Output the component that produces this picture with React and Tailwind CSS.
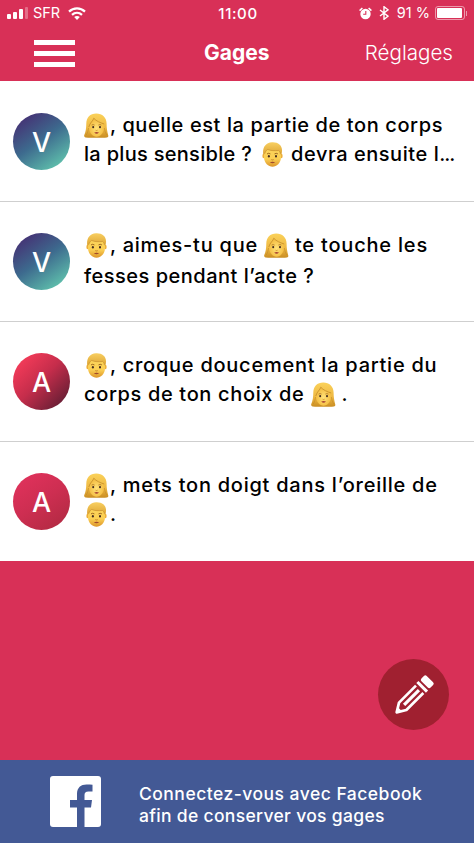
function Woman({ className = '' }) {
  return (
    <svg viewBox="0 0 25 25" className={`inline-block h-[25px] w-[25px] shrink-0 ${className}`}>
      <defs>
        <linearGradient id="hairW" x1="0" y1="0" x2="0" y2="1">
          <stop offset="0" stopColor="#fbd25a" />
          <stop offset="0.6" stopColor="#eeb843" />
          <stop offset="1" stopColor="#c98d22" />
        </linearGradient>
        <radialGradient id="skinW" cx="0.5" cy="0.55" r="0.6">
          <stop offset="0" stopColor="#ffe27a" />
          <stop offset="1" stopColor="#f2b637" />
        </radialGradient>
      </defs>
      <path d="M12.3 0.4C6 .4 2.4 4.5 2.3 10.5c0 4-.6 8.500-2 11.500-.5 1.200.1 2.300 1.400 2.500 3 .5 6 .4 9 .2h4c3 .2 5.800.3 8.200-.2 1.200-.2 1.700-1.100 1.300-2.300-1-3.200-1.600-7.500-1.600-11.700C22.500 4.200 18.300.4 12.300.4z" fill="url(#hairW)" />
      <path d="M5 13C6.500 9.500 9 8 9.800 5.200c2.200 2.800 6.500 4.600 10.200 5.600v3.700c0 5-3.500 9.300-7.400 9.300S5 19.500 5 14.500z" fill="url(#skinW)" />
      <path d="M4.800 14C6 9.500 9 8 9.800 5.200c2.200 2.800 6.500 4.600 10.400 5.800" fill="none" stroke="#bd8525" strokeWidth="0.7" />
      <path d="M2.200 22c1.500-2 2-4.500 2.300-7M22.600 22c-1.200-2-1.800-4.500-2.300-7" fill="none" stroke="#c28a26" strokeWidth="0.6" />
      <path d="M7.600 12.100q1.500-1 3 0M14.400 12.100q1.500-1 3 0" fill="none" stroke="#9d651b" strokeWidth="0.7" />
      <ellipse cx="9.200" cy="14.100" rx="1" ry="1.200" fill="#432b20" />
      <ellipse cx="16" cy="14.100" rx="1" ry="1.200" fill="#432b20" />
      <path d="M11.600 17.200q1 .6 2 0" fill="none" stroke="#c5821f" strokeWidth="0.7" />
      <path d="M10.200 19.500q2.400-1 4.800 0-2.400 2.600-4.800 0z" fill="#aa4532" />
    </svg>
  )
}

function Man({ className = '' }) {
  return (
    <svg viewBox="0 0 25 25" className={`inline-block h-[25px] w-[25px] shrink-0 ${className}`}>
      <defs>
        <linearGradient id="skinM" x1="0" y1="0" x2="0" y2="1">
          <stop offset="0" stopColor="#fbd65e" />
          <stop offset="0.65" stopColor="#fbcf53" />
          <stop offset="1" stopColor="#dc9428" />
        </linearGradient>
        <linearGradient id="hairM" x1="0" y1="0" x2="0" y2="1">
          <stop offset="0" stopColor="#f8cf61" />
          <stop offset="1" stopColor="#dda433" />
        </linearGradient>
      </defs>
      <ellipse cx="3.600" cy="14" rx="1.200" ry="2.300" fill="#edae3b" />
      <ellipse cx="21.400" cy="14" rx="1.200" ry="2.300" fill="#edae3b" />
      <path d="M4 10c0-5 4-8 8.500-8S21 5 21 10v5c0 6-4.500 9.800-8.500 9.800S4 21 4 15z" fill="url(#skinM)" />
      <path d="M3.200 12.500C2.400 6 5 .8 12 .3c6-.4 10.500 3.200 10 8.700 0 1.500-.3 2.600-.6 3.500l-1.200-.3c0-1.800-.4-3-1.500-3.700-4 .4-8.200.3-11-1C6 8.500 5 10 4.600 12.300z" fill="url(#hairM)" />
      <path d="M4.900 11.500c.5-2 1.300-3.200 2.800-4 2.800 1.300 7 1.400 11 1 1 .7 1.400 1.700 1.400 3" fill="none" stroke="#b87e25" strokeWidth="0.5" />
      <path d="M7 11.900q1.700-1.200 3.400 0M14.500 11.900q1.700-1.200 3.400 0" fill="none" stroke="#96601b" strokeWidth="0.9" />
      <ellipse cx="8.900" cy="14.200" rx="1" ry="1.200" fill="#432b20" />
      <ellipse cx="16" cy="14.200" rx="1" ry="1.200" fill="#432b20" />
      <path d="M11.300 17.600q1.200.7 2.400 0" fill="none" stroke="#b97822" strokeWidth="0.8" />
      <path d="M9.800 20.200q2.700-1 5.400 0-2.700 1.900-5.400 0z" fill="#a04a2c" />
    </svg>
  )
}

// Two lines per gage, the spacing is tuned for each piece of text
const gages = [
  {
    letter: 'V',
    circle: 'bg-[linear-gradient(145deg,#453375_12%,#3d6a8e_48%,#60c3ad_90%)]',
    second: '',
    lines: [
      <><Woman /><span className="ml-[1px] tracking-[0.6px]">, quelle est la partie de ton corps</span></>,
      <><span className="tracking-[0.3px]">la plus sensible ?</span><Man className="ml-[8px] mr-[6px]" /><span className="tracking-[0.55px]">devra ensuite l</span><span className="-tracking-[1px]">...</span></>,
    ],
  },
  {
    letter: 'V',
    circle: 'bg-[linear-gradient(145deg,#453375_12%,#3d6a8e_48%,#60c3ad_90%)]',
    second: 'mt-[2px]',
    lines: [
      <><Man /><span className="ml-[1px] tracking-[0.75px]">, aimes-tu que</span><Woman className="mx-[6px]" /><span className="tracking-[0.8px]">te touche les</span></>,
      <span className="tracking-[0.5px]">fesses pendant l’acte ?</span>,
    ],
  },
  {
    letter: 'A',
    circle: 'bg-[linear-gradient(135deg,#f03a58_15%,#c52d4b_48%,#641e34_90%)]',
    second: '',
    lines: [
      <><Man /><span className="ml-[1px] tracking-[0.75px]">, croque doucement la partie du</span></>,
      <><span className="tracking-[0.65px]">corps de ton choix de</span><Woman className="mx-[6px]" /><span>.</span></>,
    ],
  },
  {
    letter: 'A',
    circle: 'bg-[linear-gradient(145deg,#dd315a_15%,#cd2e51_50%,#b32a43_90%)]',
    second: '',
    lines: [
      <><Woman /><span className="ml-[1px] tracking-[0.75px]">, mets ton doigt dans l’oreille de</span></>,
      <><Man /><span className="ml-[1px]">.</span></>,
    ],
  },
]

function StatusBar() {
  return (
    <div className="flex h-[26px] items-center font-['Inter',sans-serif] text-[14px] leading-none">
      <div className="flex flex-1 items-center pl-[7px]">
        <div className="flex h-[12px] items-end gap-[2px]">
          <i className="h-[5px] w-[4px] rounded-[1px] bg-white" />
          <i className="h-[7px] w-[4px] rounded-[1px] bg-white" />
          <i className="h-[10px] w-[4px] rounded-[1px] bg-white" />
          <i className="h-[12px] w-[3px] rounded-[1px] bg-white/30" />
        </div>
        <span className="ml-[5px] text-[14.500px]">SFR</span>
        <svg viewBox="0 0 18 13" className="ml-[8px] h-[13px] w-[18px]" fill="none" stroke="white" strokeWidth="2.200">
          <path d="M1 4.600C5.500.2 12.500.2 17 4.600" />
          <path d="M4 7.900c3-2.800 7-2.800 10 0" />
          <path d="M6.200 10.100c1.600-1.500 4-1.500 5.600 0L9 13z" fill="white" stroke="none" />
        </svg>
      </div>
      <span className="ml-[2px] text-[15px] font-medium tracking-[0.6px]">11:00</span>
      <div className="flex flex-1 items-center justify-end pr-[7px]">
        <svg viewBox="0 0 13 13" className="h-[13px] w-[13px]">
          <circle cx="6.500" cy="7" r="5.200" fill="white" />
          <path d="M.6 3.600 3.400 1M12.400 3.600 9.600 1" stroke="white" strokeWidth="1.500" />
          <path d="M6.800 4v3.300H4.200" fill="none" stroke="#d83057" strokeWidth="1.100" />
        </svg>
        <svg viewBox="0 0 10 14" className="ml-[7px] h-[14px] w-[10px]" fill="none" stroke="white" strokeWidth="1.400">
          <path d="M1 4l8 6.200-4 3.100V.7l4 3.100L1 10" />
        </svg>
        <span className="ml-[8px] text-[14.500px]">91 %</span>
        <div className="ml-[5px] h-[14px] w-[30px] rounded-[3px] border border-white/50 p-[1px]">
          <div className="h-full w-[25px] rounded-[1px] bg-white" />
        </div>
        <i className="ml-[1px] h-[5px] w-[1px] bg-white/50" />
      </div>
    </div>
  )
}

function App() {
  return (
    <div className="flex h-[843px] w-[474px] flex-col overflow-hidden bg-[#d83057] font-['Inter',sans-serif] text-white">
      <header className="h-[81px] shrink-0">
        <StatusBar />
        <div className="flex h-[54px] items-center">
          <div className="flex w-[204px] pl-[34px]">
            <div className="flex flex-col gap-[6px]">
              <i className="h-[5px] w-[41px] bg-white" />
              <i className="h-[5px] w-[41px] bg-white" />
              <i className="h-[5px] w-[41px] bg-white" />
            </div>
          </div>
          <h1 className="text-[21px] font-bold">Gages</h1>
          <div className="flex flex-1 justify-end pr-[21px] text-[20.600px] font-light">Réglages</div>
        </div>
      </header>

      <main className="bg-white text-black">
        {gages.map((gage, i) => (
          <div key={i} className={`flex h-[120px] border-t pl-[13px] ${i > 0 ? 'border-[#cfcfcf]' : 'border-white'}`}>
            <div className={`mt-[31px] flex h-[57px] w-[57px] shrink-0 items-center justify-center rounded-full pt-[3px] text-[27px] font-medium text-white ${gage.circle}`}>
              {gage.letter}
            </div>
            <div className="ml-[14px] mt-[29px] text-[20px] font-medium leading-[29px]">
              <div className="flex h-[29px] items-center whitespace-pre">{gage.lines[0]}</div>
              <div className={`flex h-[29px] items-center whitespace-pre ${gage.second}`}>{gage.lines[1]}</div>
            </div>
          </div>
        ))}
      </main>

      <div className="flex flex-1 items-end justify-end pb-[30px] pr-[25px]">
        <button className="flex h-[71px] w-[71px] items-center justify-center rounded-full bg-[#a02030]">
          <svg viewBox="0 0 40 40" className="h-[40px] w-[40px] overflow-visible">
            <g transform="rotate(45 20 20)" fill="none" stroke="white">
              <rect x="13.500" y="-2.500" width="13" height="7.500" rx="2" fill="white" stroke="none" />
              <path d="M13.200 8.400h13.600" strokeWidth="3" />
              <path d="M14.800 12v24L20 44.500l5.200-8.500V12" strokeWidth="2.700" strokeLinejoin="round" />
              <path d="M17.500 40h5L20 45z" fill="white" stroke="none" />
              <path d="M20 13v21" strokeWidth="3.200" />
            </g>
          </svg>
        </button>
      </div>

      <footer className="flex h-[83px] shrink-0 items-center bg-[#435995]">
        <svg viewBox="0 0 51 51" className="ml-[50px] h-[51px] w-[51px]">
          <rect width="51" height="51" rx="3" fill="white" />
          <path d="M27 51V31.500h-7v-7.500h7v-6c0-6.500 4-9.500 9.500-9.500 2.500 0 4.500.1 6 .3v6.700h-4c-3 0-4 1.400-4 3.600v4.900h7.500l-1 7.500h-6.500V51z" fill="#435995" />
        </svg>
        <p className="ml-[38px] mt-[6px] whitespace-nowrap text-[17.500px] font-medium leading-[22px]">
          <span className="block tracking-[0.48px]">Connectez-vous avec Facebook</span>
          <span className="block tracking-[0.32px]">afin de conserver vos gages</span>
        </p>
      </footer>
    </div>
  )
}

export default App
